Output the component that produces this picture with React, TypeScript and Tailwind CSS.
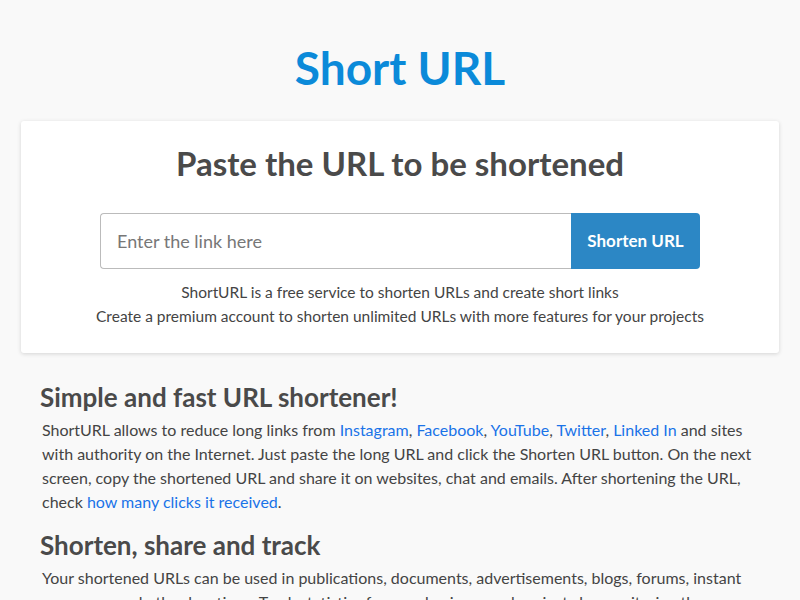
import React from 'react';

const font = { fontFamily: 'Lato, "Open Sans", sans-serif' };

function A({ children }: { children: React.ReactNode }) {
  return (
    <a href="#" className="text-[#1a73e8] hover:underline">
      {children}
    </a>
  );
}

export default function App() {
  return (
    <div className="min-h-screen bg-[#f9f9f9] text-[#444]" style={font}>
      <div className="mx-auto w-[758px] pt-[40px]">
        <h1 className="text-center text-[46px] font-bold leading-[56px] text-[#0b8ad9]">Short URL</h1>

        <div className="mt-[25px] rounded-[3px] bg-white px-[79px] pb-[25px] pt-[20px] shadow-[0_1px_4px_rgba(0,0,0,0.15)]">
          <h2 className="text-center text-[33px] font-bold leading-[44px] text-[#4a4a4a]">
            Paste the URL to be shortened
          </h2>
          <form className="mt-[28px] flex h-[56px]" onSubmit={(e) => e.preventDefault()}>
            <input
              type="text"
              placeholder="Enter the link here"
              className="h-full flex-1 rounded-l-[4px] border border-r-0 border-[#bbb] px-[16px] text-[18px] text-[#555] outline-none placeholder:text-[#777]"
            />
            <button
              type="submit"
              className="h-full w-[129px] rounded-r-[4px] bg-[#2c87c5] text-[17px] font-bold text-white"
            >
              Shorten URL
            </button>
          </form>
          <p className="-mx-[60px] mt-[11px] whitespace-nowrap text-center text-[15.5px] leading-[24px] text-[#444]">
            ShortURL is a free service to shorten URLs and create short links
            <br />
            Create a premium account to shorten unlimited URLs with more features for your projects
          </p>
        </div>

        <section className="px-[19px] pt-[26px]">
          <h3 className="text-[26px] font-bold leading-[36px] text-[#4a4a4a]">Simple and fast URL shortener!</h3>
          <p className="mt-[3px] pl-[2px] text-[16px] leading-[24px]">
            ShortURL allows to reduce long links from <A>Instagram</A>, <A>Facebook</A>, <A>YouTube</A>,{' '}
            <A>Twitter</A>, <A>Linked In</A> and sites with authority on the Internet. Just paste the long URL and
            click the Shorten URL button. On the next screen, copy the shortened URL and share it on websites, chat
            and emails. After shortening the URL, check <A>how many clicks it received</A>.
          </p>

          <h3 className="mt-[13px] text-[26px] font-bold leading-[36px] text-[#4a4a4a]">Shorten, share and track</h3>
          <p className="mt-[3px] pl-[2px] text-[16px] leading-[24px]">
            Your shortened URLs can be used in publications, documents, advertisements, blogs, forums, instant
            messages, and other locations. Track statistics for your business and projects by monitoring the number
            of hits from your URL with the click counter.
          </p>
        </section>
      </div>
    </div>
  );
}
